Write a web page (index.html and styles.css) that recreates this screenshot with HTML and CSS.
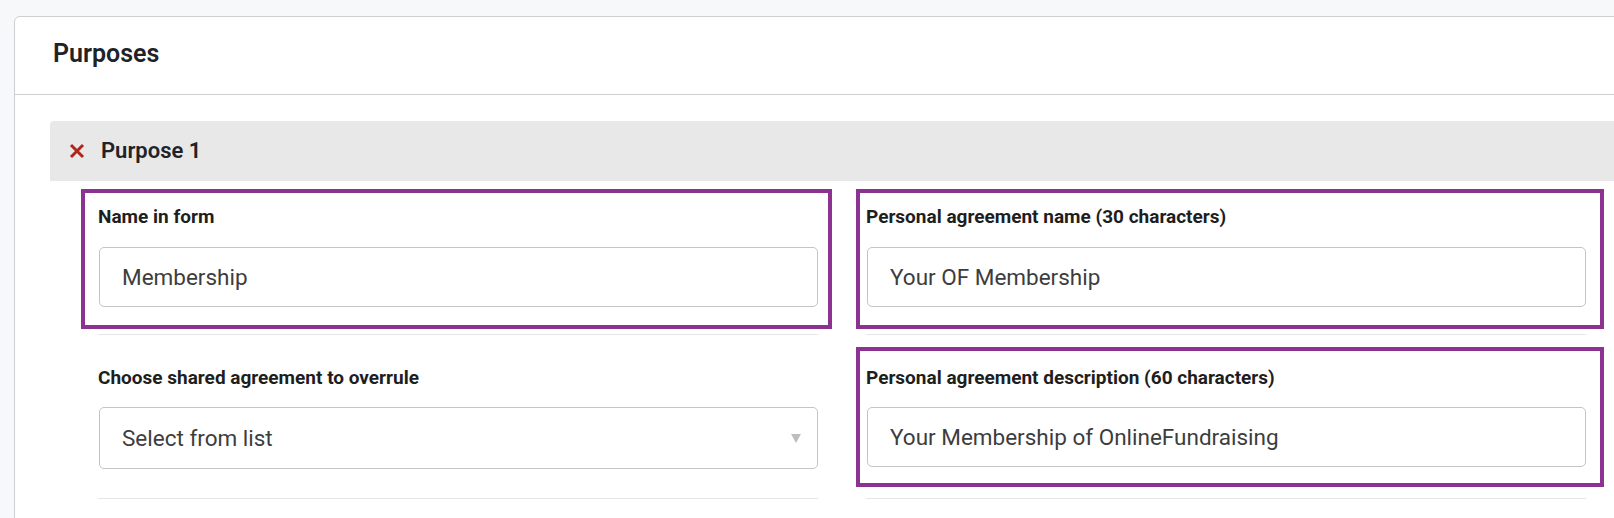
FILE: index.html
```html
<!DOCTYPE html>
<html lang="en">
<head>
<meta charset="utf-8">
<title>Purposes</title>
<link rel="stylesheet" href="styles.css">
</head>
<body>
<div class="card">
  <div class="card-header">Purposes</div>
  <div class="card-body">
    <div class="purpose-bar">
      <svg class="remove-icon" width="16" height="16" viewBox="0 0 16 16" aria-hidden="true">
        <path d="M2 2 L14 14 M14 2 L2 14" stroke="#b0261e" stroke-width="3" stroke-linecap="butt" fill="none"/>
      </svg>
      <span class="purpose-title">Purpose 1</span>
    </div>
    <div class="purpose-grid">
      <div class="cell row-first">
        <div class="field">
          <div class="field-label">Name in form</div>
          <div class="control">Membership</div>
          <div class="highlight hl-left"></div>
        </div>
      </div>
      <div class="cell row-first">
        <div class="field">
          <div class="field-label">Personal agreement name (30 characters)</div>
          <div class="control">Your OF Membership</div>
          <div class="highlight hl-right"></div>
        </div>
      </div>
      <div class="cell row-second">
        <div class="field">
          <div class="field-label">Choose shared agreement to overrule</div>
          <div class="control select">
            <span>Select from list</span>
            <span class="caret"></span>
          </div>
        </div>
      </div>
      <div class="cell row-second">
        <div class="field">
          <div class="field-label">Personal agreement description (60 characters)</div>
          <div class="control">Your Membership of OnlineFundraising</div>
          <div class="highlight hl-right2"></div>
        </div>
      </div>
    </div>
  </div>
</div>
</body>
</html>
```

FILE: styles.css
```css
html, body {
  margin: 0;
  padding: 0;
}
body {
  background: #f7f8fa;
  font-family: Roboto, "Liberation Sans", Arial, sans-serif;
  color: #212529;
  overflow: hidden;
  width: 1614px;
  height: 518px;
}
.card {
  margin: 16px 0 0 14px;
  width: 1700px;
  background: #ffffff;
  border: 1px solid #cfcfd3;
  border-radius: 6px;
  height: 560px;
  box-sizing: border-box;
}
.card-header {
  box-sizing: border-box;
  height: 78px;
  padding: 22px 38px 0;
  border-bottom: 1px solid #cfcfd3;
  font-size: 25px;
  line-height: 30px;
  font-weight: 600;
  color: #1f2328;
}
.card-body {
  padding: 26px 0 0 35px;
}
.purpose-bar {
  display: flex;
  align-items: center;
  height: 60px;
  background: #e8e8e8;
  border-top-left-radius: 4px;
  padding-left: 19px;
  gap: 16px;
}
.remove-icon {
  display: block;
  flex: none;
}
.purpose-title {
  font-size: 22px;
  line-height: 26px;
  font-weight: 600;
  color: #1f2328;
}
.purpose-grid {
  display: grid;
  grid-template-columns: 720px 720px;
  column-gap: 48px;
  padding-left: 48px;
}
.cell {
  border-bottom: 1px solid #e6e6e6;
}
.row-first {
  padding: 25px 0 27px;
}
.row-second {
  padding: 32px 0 29px;
}
.field {
  position: relative;
}
.field-label {
  font-size: 19px;
  line-height: 22px;
  font-weight: 700;
  color: #1e1e1e;
  margin-bottom: 19px;
}
.row-second .field-label {
  margin-bottom: 18px;
}
.control {
  box-sizing: border-box;
  height: 60px;
  border: 1px solid #c4c4c4;
  border-radius: 5px;
  padding: 0 22px;
  display: flex;
  align-items: center;
  font-size: 22.5px;
  color: #3d3d3d;
  margin-left: 1px;
}
.control.select {
  height: 62px;
  justify-content: space-between;
  padding-right: 16px;
}
.caret {
  width: 0;
  height: 0;
  border-left: 5.5px solid transparent;
  border-right: 5.5px solid transparent;
  border-top: 9px solid #bdbdbd;
}
.highlight {
  position: absolute;
  border: 4px solid #8c3290;
  pointer-events: none;
}
.hl-left {
  left: -17px;
  top: -17px;
  right: -14px;
  bottom: -22px;
}
.hl-right {
  left: -10px;
  top: -17px;
  right: -18px;
  bottom: -22px;
}
.hl-right2 {
  left: -10px;
  top: -20px;
  right: -18px;
  bottom: -20px;
}
```
